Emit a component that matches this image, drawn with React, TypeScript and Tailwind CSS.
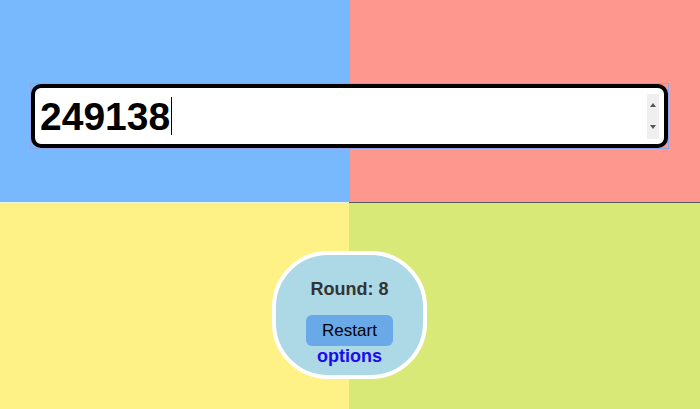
export default function App() {
  return (
    <div
      className="relative h-[409px] w-[700px] overflow-hidden"
      style={{ fontFamily: '"Liberation Sans", Arial, sans-serif' }}
    >
      {/* quadrants */}
      <div className="grid h-full grid-cols-[350px_350px] grid-rows-[202px_207px]">
        <div className="bg-[#78b9fd]" />
        <div className="bg-[#fe978d]" />
        <div className="border-r border-t border-r-[#c9b95c] border-t-[#eef3e4] bg-[#fef286]" />
        <div className="-ml-px border-t border-t-[#5a5a5a] bg-[#d9e978]" />
      </div>

      {/* number input */}
      <div className="absolute left-[30px] top-[83px] h-[66px] w-[639px] border border-[#8ea3e8]">
        <div className="flex h-full items-center rounded-[10px] border-4 border-black bg-white pl-[5px] pr-[5px]">
          <span className="text-[39px] font-bold leading-none text-black">249138</span>
          <span className="ml-px h-[38px] w-px bg-black" />
          <div className="ml-auto flex h-[45px] w-[12px] flex-col items-center justify-around bg-[#efefef]">
            <svg width="6" height="4" viewBox="0 0 6 4">
              <path d="M0 4L3 0L6 4Z" fill="#555" />
            </svg>
            <svg width="6" height="4" viewBox="0 0 6 4">
              <path d="M0 0L6 0L3 4Z" fill="#555" />
            </svg>
          </div>
        </div>
      </div>

      {/* round badge */}
      <div className="absolute left-[272px] top-[251px] flex h-[128px] w-[155px] flex-col items-center rounded-[56px] border-4 border-white bg-[#add8e6] pt-[24px]">
        <div className="text-[18px] font-bold leading-[21px] text-[#333]">Round: 8</div>
        <button className="mt-[15px] h-[31px] w-[87px] rounded-[6px] bg-[#6aa9e8] text-[17px] leading-none text-black">
          Restart
        </button>
        <a href="#" className="text-[18px] font-bold leading-[21px] text-[#1a0dea]">
          options
        </a>
      </div>
    </div>
  )
}
